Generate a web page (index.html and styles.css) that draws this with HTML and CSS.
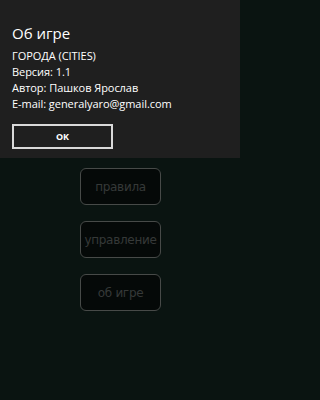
FILE: index.html
```html
<!DOCTYPE html>
<html lang="ru">
<head>
<meta charset="utf-8">
<title>Об игре</title>
<link rel="stylesheet" href="styles.css">
</head>
<body>
<div class="dialog">
  <h1 class="title">Об игре</h1>
  <p class="line">ГОРОДА (CITIES)</p>
  <p class="line">Версия: 1.1</p>
  <p class="line">Автор: Пашков Ярослав</p>
  <p class="line">E-mail: generalyaro@gmail.com</p>
  <button class="ok">OK</button>
</div>
<div class="menu">
  <button class="menu-btn">правила</button>
  <button class="menu-btn">управление</button>
  <button class="menu-btn">об игре</button>
</div>
</body>
</html>
```

FILE: styles.css
```css
html, body {
  margin: 0;
  padding: 0;
}
body {
  width: 240px;
  height: 400px;
  background: #0a1411;
  font-family: "Open Sans", "Noto Sans", sans-serif;
  overflow: hidden;
}
.dialog {
  background: #1f1f1f;
  height: 158px;
  box-sizing: border-box;
  padding: 24px 12px 0 12px;
  color: #ffffff;
}
.title {
  margin: 0 0 6px 0;
  font-size: 15px;
  font-weight: 400;
  line-height: 18px;
}
.line {
  margin: 0;
  font-size: 11px;
  line-height: 16px;
  letter-spacing: -0.05px;
}
.ok {
  display: block;
  margin-top: 12px;
  width: 101px;
  height: 25px;
  box-sizing: border-box;
  border: 2px solid #d9d9d9;
  background: transparent;
  color: #ffffff;
  font-family: "Open Sans", sans-serif;
  font-weight: 700;
  font-size: 9px;
  padding: 0;
}
.menu {
  display: flex;
  flex-direction: column;
  align-items: center;
  gap: 16px;
  padding-top: 10px;
  padding-left: 1px;
}
.menu-btn {
  width: 81px;
  height: 37px;
  box-sizing: border-box;
  border: 1px solid #474a48;
  border-radius: 6px;
  background: #050908;
  color: #363938;
  font-family: "DejaVu Sans", sans-serif;
  font-size: 12px;
  letter-spacing: -0.3px;
  padding: 0;
}
```
